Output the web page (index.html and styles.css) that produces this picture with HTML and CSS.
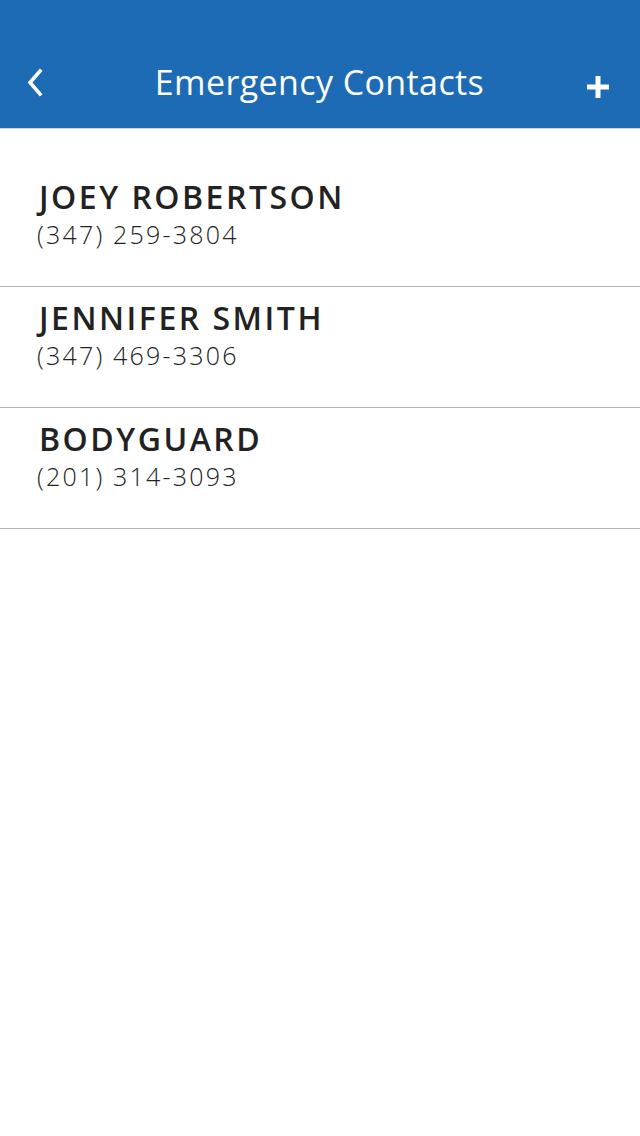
FILE: index.html
```html
<!DOCTYPE html>
<html>
<head>
<meta charset="utf-8">
<link rel="stylesheet" href="styles.css">
</head>
<body>
<header class="bar">
  <button class="icon-btn back" aria-label="Back">
    <svg width="22" height="30" viewBox="0 0 22 30"><path d="M16 3 L6 14.5 L16 26" fill="none" stroke="#fff" stroke-width="3.6" stroke-linecap="square"/></svg>
  </button>
  <h1 class="title">Emergency Contacts</h1>
  <button class="icon-btn add" aria-label="Add">
    <svg width="24" height="24" viewBox="0 0 24 24"><path d="M12 1 V23 M1 12 H23" stroke="#fff" stroke-width="5"/></svg>
  </button>
</header>
<ul class="list">
  <li class="row"><div class="name">JOEY ROBERTSON</div><div class="phone">(347) 259-3804</div></li>
  <li class="row"><div class="name">JENNIFER SMITH</div><div class="phone">(347) 469-3306</div></li>
  <li class="row"><div class="name">BODYGUARD</div><div class="phone">(201) 314-3093</div></li>
</ul>
</body>
</html>
```
FILE: styles.css
```css
* { box-sizing: border-box; }
html, body { margin: 0; padding: 0; background: #fff; }
body { font-family: "Open Sans", "Liberation Sans", sans-serif; width: 640px; height: 1136px; }
.bar {
  height: 129px;
  background: #1e6bb5;
  border-bottom: 1px solid #cfd4da;
  display: flex;
  align-items: flex-end;
  padding: 0 30px 26px 24px;
}
.icon-btn { background: none; border: 0; padding: 0; display: flex; }
.back { margin-bottom: 4px; }
.add { margin-bottom: 3px; }
.title {
  flex: 1;
  margin: 0;
  padding-left: 7px;
  text-align: center;
  color: #fff;
  font-weight: 370;
  font-size: 34px;
  line-height: 40px;
  letter-spacing: 0.4px;
}
.list { list-style: none; margin: 0; padding: 37px 0 0; }
.row {
  height: 121px;
  border-bottom: 1px solid #b3b3b3;
  padding: 11px 0 0 37px;
}
.name {
  font-size: 32px;
  font-weight: 580;
  letter-spacing: 2.5px;
  color: #222;
  line-height: 40px;
  padding-left: 2px;
}
.phone {
  font-size: 25px;
  font-weight: 360;
  letter-spacing: 2.2px;
  color: #222;
  line-height: 34px;
}
```
